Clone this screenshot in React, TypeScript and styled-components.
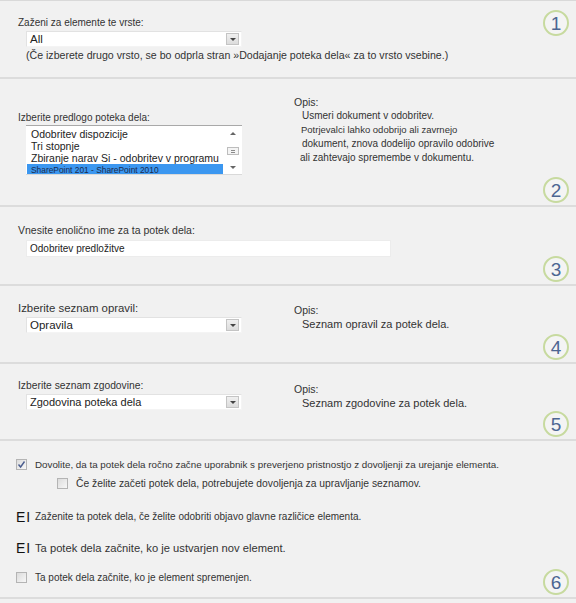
import React from 'react';
import styled, { createGlobalStyle } from 'styled-components';

const GlobalStyle = createGlobalStyle`
  html, body {
    margin: 0;
    padding: 0;
    background: #f1f1f1;
  }
  body {
    font-family: "Liberation Sans", Arial, sans-serif;
  }
`;

const Page = styled.div`
  width: 576px;
  height: 603px;
  box-sizing: border-box;
  background: #f1f1f1;
  border-top: 1px solid #d9d9d9;
  color: #3a3a3a;
  font-size: 10px;
  overflow: hidden;
`;

const Section = styled.section<{ $h: number }>`
  height: ${(p) => p.$h}px;
  box-sizing: border-box;
  border-bottom: 2px solid #dcdcdc;
  display: grid;
  grid-template-columns: 276px 1fr 44px;
`;

const Main = styled.div<{ $pt: number }>`
  padding: ${(p) => p.$pt}px 0 0 18px;
  display: flex;
  flex-direction: column;
  align-items: flex-start;
  min-width: 0;
`;

const Side = styled.div<{ $pt: number }>`
  padding: ${(p) => p.$pt}px 0 0 18px;
  line-height: 14px;
`;

const Badge = styled.div<{ $top?: boolean }>`
  grid-column: 3;
  justify-self: start;
  align-self: ${(p) => (p.$top ? 'start' : 'end')};
  margin: ${(p) => (p.$top ? '9px 0 0 11px' : '0 0 2px 11px')};
  width: 26px;
  height: 26px;
  box-sizing: border-box;
  border: 2px solid #c7da9f;
  border-radius: 50%;
  background: #f4f4f4;
  display: flex;
  align-items: center;
  justify-content: center;
  color: #4d6692;
  font-size: 19px;
  line-height: 1;
`;

const Label = styled.div<{ $size?: number }>`
  font-size: ${(p) => p.$size ?? 10}px;
  line-height: 13px;
  color: #333;
  white-space: nowrap;
`;

const SelectBox = styled.div<{ $mt?: number }>`
  margin: ${(p) => p.$mt ?? 2}px 0 0 8px;
  width: 216px;
  height: 16px;
  box-sizing: border-box;
  background: #fff;
  border: 1px solid #e2e2e2;
  border-right-color: #f4f4f4;
  border-bottom-color: #f4f4f4;
  display: flex;
  align-items: center;
  justify-content: space-between;
`;

const SelectValue = styled.span<{ $size?: number }>`
  padding-left: 3px;
  font-size: ${(p) => p.$size ?? 11}px;
  color: #222;
`;

const DropButton = styled.span`
  width: 13px;
  height: 12px;
  margin-right: 2px;
  box-sizing: border-box;
  border: 1px solid #c4c4c4;
  background: linear-gradient(#f0f0f0, #dcdcdc);
  display: flex;
  align-items: center;
  justify-content: center;
  &::after {
    content: '';
    border-left: 3px solid transparent;
    border-right: 3px solid transparent;
    border-top: 3px solid #444;
  }
`;

const Hint = styled.div`
  margin: 2px 0 0 8px;
  font-size: 10.6px;
  line-height: 13px;
  color: #333;
  white-space: nowrap;
`;

const ListBox = styled.div`
  margin: 1px 0 0 8px;
  width: 216px;
  height: 50px;
  box-sizing: border-box;
  background: #fff;
  border-top: 1px solid #a9a9a9;
  border-bottom: 1px solid #d9d9d9;
  display: flex;
`;

const ListItems = styled.div`
  flex: 1;
  padding-top: 2px;
  overflow: hidden;
`;

const ListItem = styled.div<{ $selected?: boolean }>`
  height: 12px;
  line-height: 12px;
  padding-left: 4px;
  margin-left: 1px;
  white-space: nowrap;
  font-size: ${(p) => (p.$selected ? 8.4 : 10.5)}px;
  color: ${(p) => (p.$selected ? '#1b2a4a' : '#222')};
  background: ${(p) => (p.$selected ? '#3b97f0' : 'transparent')};
`;

const ScrollBar = styled.div`
  width: 19px;
  display: flex;
  flex-direction: column;
  align-items: center;
  justify-content: space-between;
  padding: 6px 0 5px;
  box-sizing: border-box;
`;

const Arrow = styled.span<{ $up?: boolean }>`
  border-left: 3px solid transparent;
  border-right: 3px solid transparent;
  ${(p) => (p.$up ? 'border-bottom: 3px solid #666;' : 'border-top: 3px solid #666;')}
`;

const Grip = styled.span`
  width: 12px;
  height: 8px;
  box-sizing: border-box;
  border: 1px solid #bdbdbd;
  background: repeating-linear-gradient(#f4f4f4 0 1px, #8a8a8a 1px 2px) content-box, #f4f4f4;
  padding: 1px 3px;
`;

const TextInput = styled.div`
  margin: 3px 0 0 8px;
  width: 365px;
  height: 17px;
  box-sizing: border-box;
  background: #fff;
  border: 1px solid #ececec;
  padding-left: 3px;
  font-size: 10px;
  line-height: 15px;
  color: #222;
`;

const DescTitle = styled.div`
  font-size: 10.5px;
  color: #333;
`;

const DescText = styled.div<{ $size?: number; $indent?: number }>`
  padding-left: ${(p) => p.$indent ?? 8}px;
  font-size: ${(p) => p.$size ?? 10}px;
  color: #333;
  white-space: nowrap;
`;

const Options = styled.div`
  grid-column: 1 / 3;
  padding: 17px 0 0 16px;
  display: flex;
  flex-direction: column;
`;

const OptionRow = styled.div<{ $indent?: number; $mt?: number; $size?: number }>`
  display: flex;
  align-items: center;
  margin: ${(p) => p.$mt ?? 0}px 0 0 ${(p) => p.$indent ?? 0}px;
  height: 13px;
  font-size: ${(p) => p.$size ?? 10}px;
  color: #333;
  white-space: nowrap;
`;

const CheckBox = styled.span`
  width: 11px;
  height: 11px;
  box-sizing: border-box;
  border: 1px solid #b4b4b4;
  background: linear-gradient(135deg, #dcdcdc, #f7f7f7);
  margin-right: 8px;
  display: flex;
  align-items: center;
  justify-content: center;
  flex-shrink: 0;
`;

const Glyph = styled.span`
  width: 19px;
  font-size: 14px;
  color: #111;
  letter-spacing: 1px;
  flex-shrink: 0;
`;

const Check = () => (
  <svg width="9" height="9" viewBox="0 0 9 9">
    <path d="M1.5 4.5 L3.6 7 L7.5 1.5" fill="none" stroke="#4a5d8e" strokeWidth="1.4" />
  </svg>
);

const App: React.FC = () => {
  return (
    <>
      <GlobalStyle />
      <Page>
        <Section $h={78}>
          <Main $pt={15}>
            <Label>Zaženi za elemente te vrste:</Label>
            <SelectBox>
              <SelectValue $size={11.5}>All</SelectValue>
              <DropButton />
            </SelectBox>
            <Hint>(Če izberete drugo vrsto, se bo odprla stran »Dodajanje poteka dela« za to vrsto vsebine.)</Hint>
          </Main>
          <div />
          <Badge $top>1</Badge>
        </Section>

        <Section $h={128}>
          <Main $pt={32}>
            <Label>Izberite predlogo poteka dela:</Label>
            <ListBox>
              <ListItems>
                <ListItem>Odobritev dispozicije</ListItem>
                <ListItem>Tri stopnje</ListItem>
                <ListItem>Zbiranje narav Si - odobritev v programu</ListItem>
                <ListItem $selected>SharePoint 201 - SharePoint 2010</ListItem>
              </ListItems>
              <ScrollBar>
                <Arrow $up />
                <Grip />
                <Arrow />
              </ScrollBar>
            </ListBox>
          </Main>
          <Side $pt={16}>
            <DescTitle>Opis:</DescTitle>
            <DescText>Usmeri dokument v odobritev.</DescText>
            <DescText $size={9.5} $indent={7}>Potrjevalci lahko odobrijo ali zavrnejo</DescText>
            <DescText>dokument, znova dodelijo opravilo odobrive</DescText>
            <DescText $indent={6}>ali zahtevajo spremembe v dokumentu.</DescText>
          </Side>
          <Badge>2</Badge>
        </Section>

        <Section $h={79}>
          <Main $pt={17}>
            <Label $size={10.5}>Vnesite enolično ime za ta potek dela:</Label>
            <TextInput>Odobritev predložitve</TextInput>
          </Main>
          <div />
          <Badge>3</Badge>
        </Section>

        <Section $h={78}>
          <Main $pt={16}>
            <Label $size={11.4}>Izberite seznam opravil:</Label>
            <SelectBox>
              <SelectValue $size={11.5}>Opravila</SelectValue>
              <DropButton />
            </SelectBox>
          </Main>
          <Side $pt={17}>
            <DescTitle>Opis:</DescTitle>
            <DescText $size={11}>Seznam opravil za potek dela.</DescText>
          </Side>
          <Badge>4</Badge>
        </Section>

        <Section $h={77}>
          <Main $pt={15}>
            <Label $size={10.3}>Izberite seznam zgodovine:</Label>
            <SelectBox>
              <SelectValue $size={11}>Zgodovina poteka dela</SelectValue>
              <DropButton />
            </SelectBox>
          </Main>
          <Side $pt={18}>
            <DescTitle>Opis:</DescTitle>
            <DescText $size={11}>Seznam zgodovine za potek dela.</DescText>
          </Side>
          <Badge>5</Badge>
        </Section>

        <Section $h={158}>
          <Options>
            <OptionRow $size={9.8}>
              <CheckBox>
                <Check />
              </CheckBox>
              Dovolite, da ta potek dela ročno začne uporabnik s preverjeno pristnostjo z dovoljenji za urejanje elementa.
            </OptionRow>
            <OptionRow $indent={41} $mt={6} $size={10.3}>
              <CheckBox />
              Če želite začeti potek dela, potrebujete dovoljenja za upravljanje seznamov.
            </OptionRow>
            <OptionRow $mt={20}>
              <Glyph>EI</Glyph>
              Zaženite ta potek dela, če želite odobriti objavo glavne različice elementa.
            </OptionRow>
            <OptionRow $mt={18} $size={11.2}>
              <Glyph>EI</Glyph>
              Ta potek dela začnite, ko je ustvarjen nov element.
            </OptionRow>
            <OptionRow $mt={17}>
              <CheckBox />
              Ta potek dela začnite, ko je element spremenjen.
            </OptionRow>
          </Options>
          <Badge>6</Badge>
        </Section>
      </Page>
    </>
  );
};

export default App;
